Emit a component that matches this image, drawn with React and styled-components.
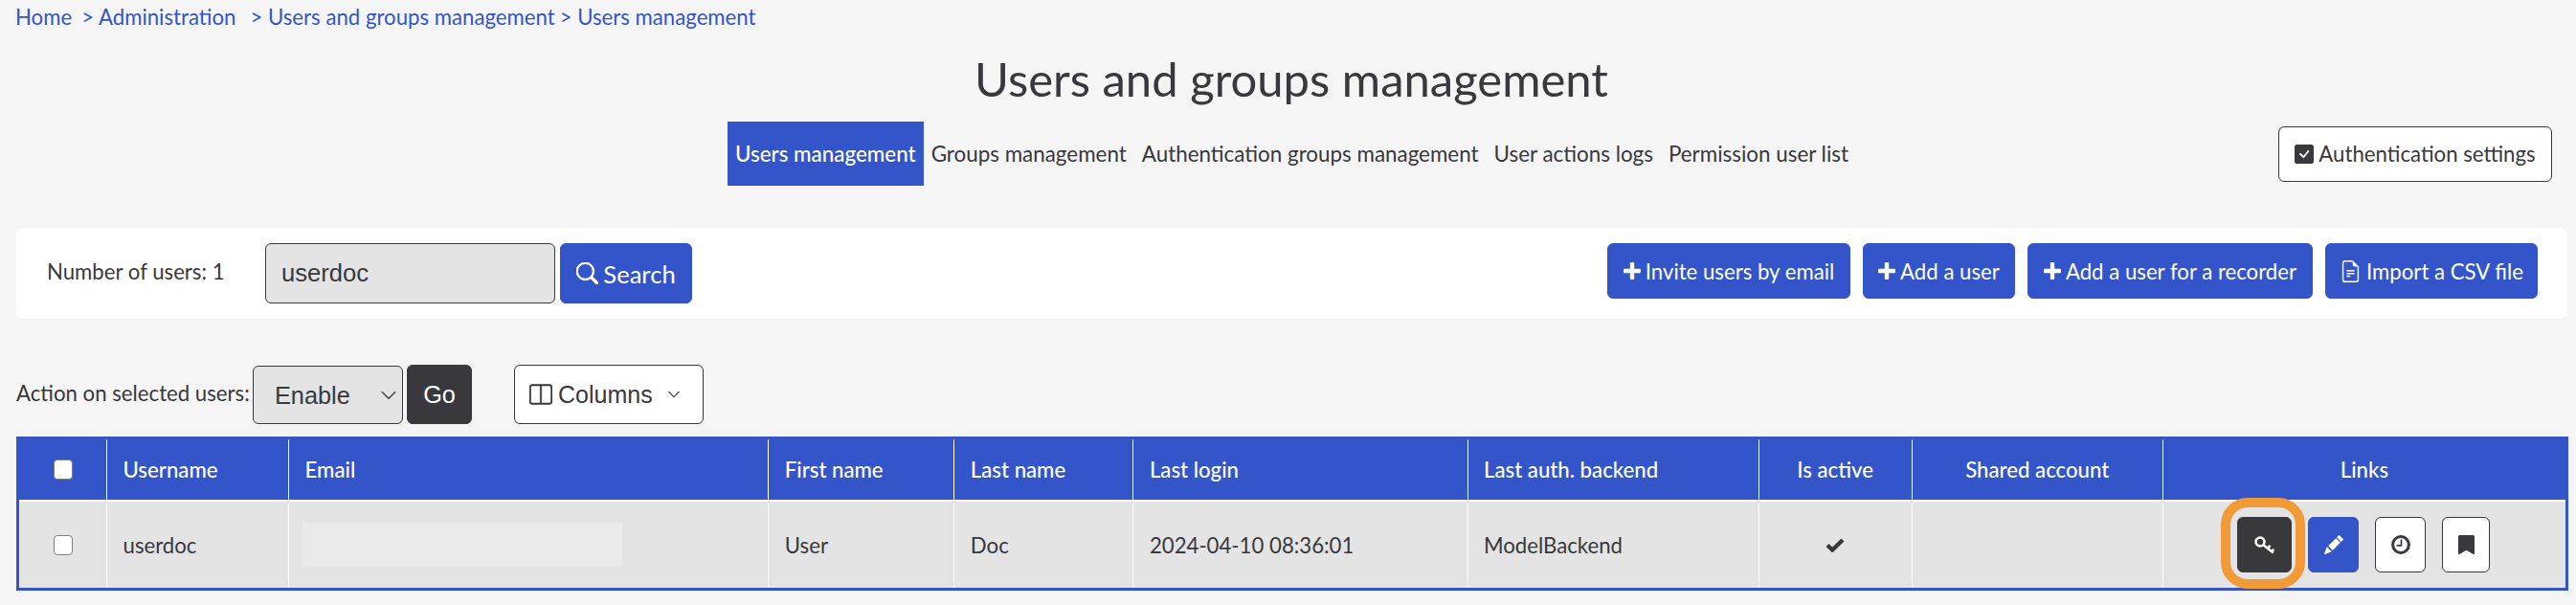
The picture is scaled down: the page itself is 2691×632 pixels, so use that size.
import React from "react";
import styled, { createGlobalStyle } from "styled-components";
import {
  BsCheckSquareFill,
  BsChevronDown,
  BsFileEarmarkText,
  BsLayoutSplit,
  BsPencilFill,
  BsSearch,
} from "react-icons/bs";

const BLUE = "#3355c9";
const DARK = "#38383d";

const GlobalStyle = createGlobalStyle`
  html, body {
    margin: 0;
    padding: 0;
    background: #f5f5f5;
    color: ${DARK};
    font-family: "Lato", "Liberation Sans", sans-serif;
    font-size: 22.2px;
  }
`;

const Page = styled.div`
  width: 2691px;
  height: 632px;
  overflow: hidden;
`;

const Breadcrumb = styled.nav`
  display: flex;
  height: 57px;
  padding: 5px 0 0 16px;
  box-sizing: border-box;
  line-height: 26px;
  color: ${BLUE};
`;

const Crumb = styled.a`
  color: ${BLUE};
  text-decoration: none;
  margin-right: ${(p) => p.$gap || 0}px;
  white-space: pre;
`;

const Title = styled.h1`
  margin: 0;
  height: 70px;
  padding-left: 7px;
  line-height: 50px;
  font-size: 49px;
  font-weight: 400;
  text-align: center;
`;

const TabRow = styled.div`
  display: grid;
  grid-template-columns: 1fr auto 1fr;
  align-items: center;
  height: 67px;
`;

const Tabs = styled.div`
  grid-column: 2;
  display: flex;
  height: 100%;
  margin-left: 8px;
  font-size: 22.4px;
`;

const Tab = styled.a`
  display: flex;
  align-items: center;
  padding: 0 8px;
  font-weight: ${(p) => (p.$active ? 500 : 400)};
  color: ${(p) => (p.$active ? "#fff" : DARK)};
  background: ${(p) => (p.$active ? BLUE : "transparent")};
`;

const Button = styled.button`
  display: inline-flex;
  align-items: center;
  justify-content: center;
  gap: 5px;
  box-sizing: border-box;
  width: ${(p) => p.$width}px;
  height: ${(p) => p.$height || 58}px;
  padding: 0;
  border: 1px solid ${(p) => (p.$variant === "outline" || p.$variant === "dark" ? DARK : BLUE)};
  border-radius: 6px;
  font: inherit;
  color: ${(p) => (p.$variant === "outline" ? DARK : "#fff")};
  background: ${(p) => (p.$variant === "outline" ? "#fff" : p.$variant === "dark" ? DARK : BLUE)};
`;

const AuthButton = styled(Button)`
  grid-column: 3;
  justify-self: end;
  margin-right: 25px;
`;

const SearchPanel = styled.section`
  display: flex;
  align-items: flex-start;
  justify-content: space-between;
  height: 95px;
  margin: 44px 9px 0 17px;
  padding: 16px 31px 0 32px;
  box-sizing: border-box;
  border-radius: 8px;
  background: #fff;
`;

const SearchForm = styled.form`
  display: flex;
  align-items: center;
  margin: 0;
`;

const UserCount = styled.span`
  width: 228px;
  padding-bottom: 5px;
`;

const SearchInput = styled.input`
  box-sizing: border-box;
  width: 303px;
  height: 63px;
  padding: 0 16px;
  border: 1px solid ${DARK};
  border-radius: 6px;
  background: #e4e4e4;
  color: ${DARK};
  font-family: "Liberation Sans", Arial, sans-serif;
  font-size: 25.6px;
`;

const SearchButton = styled(Button)`
  margin-left: 5px;
  font-size: 25.6px;
  gap: 5px;
  svg {
    stroke: currentColor;
    stroke-width: 0.6;
  }
`;

const PanelActions = styled.div`
  display: flex;
  gap: 13px;
`;

const ActionRow = styled.form`
  display: flex;
  align-items: center;
  height: 62px;
  margin: 48px 0 13px 17px;
`;

const ActionLabel = styled.label`
  width: 247px;
  padding-bottom: 4px;
`;

const SelectWrap = styled.span`
  position: relative;
  display: inline-block;
  height: 61px;
  margin-top: 1px;
  color: ${DARK};
`;

const Select = styled.select`
  appearance: none;
  box-sizing: border-box;
  width: 157px;
  height: 61px;
  padding: 0 0 0 22px;
  border: 1px solid ${DARK};
  border-radius: 6px;
  background: #e4e4e4;
  color: ${DARK};
  font-family: "Liberation Sans", Arial, sans-serif;
  font-size: 25.3px;
`;

const SelectChevron = styled(BsChevronDown)`
  position: absolute;
  top: 22px;
  right: 6px;
  width: 18px;
  height: 18px;
  stroke: currentColor;
  stroke-width: 0.3;
  pointer-events: none;
`;

const GoButton = styled(Button)`
  margin-left: 4px;
  font-family: "Liberation Sans", Arial, sans-serif;
  font-size: 25.3px;
`;

const ColumnsButton = styled(Button)`
  justify-content: flex-start;
  margin-left: 44px;
  padding-left: 15px;
  gap: 6px;
  font-family: "Liberation Sans", Arial, sans-serif;
  font-size: 25px;
  svg {
    stroke: currentColor;
    stroke-width: 0.35;
  }
`;

const ColumnsChevron = styled(BsChevronDown)`
  width: 14px;
  height: 14px;
  margin-left: 9px;
`;

const Table = styled.table`
  box-sizing: border-box;
  width: 2666px;
  margin-left: 17px;
  border: 3px solid ${BLUE};
  border-collapse: separate;
  border-spacing: 0;
  table-layout: fixed;
`;

const HeaderCell = styled.th`
  box-sizing: border-box;
  height: 65px;
  padding: 0 16.5px;
  border-bottom: 2px solid #fff;
  background: ${BLUE};
  color: #fff;
  font-weight: 500;
  text-align: ${(p) => p.$align || "left"};
  & + & {
    border-left: 1.5px solid #fff;
  }
`;

const Cell = styled.td`
  box-sizing: border-box;
  height: 90px;
  padding: 0 16.5px;
  background: #e4e4e4;
  text-align: ${(p) => p.$align || "left"};
  & + & {
    border-left: 1.5px solid #fff;
  }
`;

const Checkbox = styled.input.attrs({ type: "checkbox" })`
  appearance: none;
  display: block;
  width: 20px;
  height: 21px;
  margin: 0 auto;
  border: 1.5px solid #808080;
  border-radius: 4px;
  background: #fff;
`;

const HiddenEmail = styled.div`
  width: 334px;
  height: 46px;
  margin-left: -3px;
  background: #eaeaea;
`;

const ActiveCheck = styled.svg`
  display: block;
  width: 20px;
  height: 15px;
  margin: 0 auto;
`;

const LinkGroup = styled.div`
  display: flex;
  justify-content: flex-end;
  gap: 17px;
  padding-right: 62.5px;
`;

const RingAnchor = styled.span`
  position: relative;
  display: inline-flex;
  &::after {
    content: "";
    position: absolute;
    top: -20px;
    right: -14px;
    bottom: -17px;
    left: -17px;
    border: 10px solid #f39a38;
    border-radius: 28px;
    pointer-events: none;
  }
`;

const columnWidths = [91, 190, 501, 194, 187, 349, 304, 160, 262, 421];

function KeyIcon() {
  return (
    <svg width="21" height="19" viewBox="0 0 21 19" fill="none" stroke="currentColor" strokeWidth="2.6">
      <circle cx="6" cy="6" r="4.5" />
      <path d="M9.5 9.3L19.8 17.6M13.8 12.8l2.8-3M18 16.2l2.2-2.4" />
    </svg>
  );
}

function PlusIcon() {
  return (
    <svg width="18" height="18" viewBox="0 0 18 18" fill="currentColor">
      <path d="M6.8 1a1 1 0 0 1 1-1h2.4a1 1 0 0 1 1 1v5.8H17a1 1 0 0 1 1 1v2.4a1 1 0 0 1-1 1h-5.8V17a1 1 0 0 1-1 1H7.8a1 1 0 0 1-1-1v-5.8H1a1 1 0 0 1-1-1V7.8a1 1 0 0 1 1-1h5.8z" />
    </svg>
  );
}

function ClockIcon() {
  return (
    <svg width="20" height="20" viewBox="0 0 20 20" fill="none" stroke="currentColor">
      <circle cx="10" cy="10" r="8.4" strokeWidth="3" />
      <path d="M10.5 4.6v6.2H5.6" strokeWidth="1.7" />
    </svg>
  );
}

function BookmarkIcon() {
  return (
    <svg width="17" height="20" viewBox="0 0 17 20" fill="currentColor">
      <path d="M1.5 0h14A1.5 1.5 0 0 1 17 1.5V19a1 1 0 0 1-1.5.8L8.5 15.8l-7 4A1 1 0 0 1 0 19V1.5A1.5 1.5 0 0 1 1.5 0z" />
    </svg>
  );
}

export default function App() {
  return (
    <Page>
      <GlobalStyle />
      <Breadcrumb>
        <Crumb $gap={10}>Home</Crumb>
        <Crumb $gap={15}>&gt; Administration</Crumb>
        <Crumb $gap={5}>&gt; Users and groups management</Crumb>
        <Crumb>&gt; Users management</Crumb>
      </Breadcrumb>
      <Title>Users and groups management</Title>
      <TabRow>
        <Tabs>
          <Tab $active>Users management</Tab>
          <Tab>Groups management</Tab>
          <Tab>Authentication groups management</Tab>
          <Tab>User actions logs</Tab>
          <Tab>Permission user list</Tab>
        </Tabs>
        <AuthButton $variant="outline" $width={286}>
          <BsCheckSquareFill size={20} />
          Authentication settings
        </AuthButton>
      </TabRow>
      <SearchPanel>
        <SearchForm>
          <UserCount>Number of users: 1</UserCount>
          <SearchInput defaultValue="userdoc" />
          <SearchButton $width={138} $height={63}>
            <BsSearch size={23} />
            Search
          </SearchButton>
        </SearchForm>
        <PanelActions>
          <Button $width={254}>
            <PlusIcon />
            Invite users by email
          </Button>
          <Button $width={159}>
            <PlusIcon />
            Add a user
          </Button>
          <Button $width={298}>
            <PlusIcon />
            Add a user for a recorder
          </Button>
          <Button $width={222}>
            <BsFileEarmarkText size={23} />
            Import a CSV file
          </Button>
        </PanelActions>
      </SearchPanel>
      <ActionRow>
        <ActionLabel>Action on selected users:</ActionLabel>
        <SelectWrap>
          <Select defaultValue="enable">
            <option value="enable">Enable</option>
          </Select>
          <SelectChevron />
        </SelectWrap>
        <GoButton $variant="dark" $width={68} $height={62}>
          Go
        </GoButton>
        <ColumnsButton $variant="outline" $width={198} $height={62}>
          <BsLayoutSplit size={24} />
          Columns
          <ColumnsChevron />
        </ColumnsButton>
      </ActionRow>
      <Table>
        <colgroup>
          {columnWidths.map((w, i) => (
            <col key={i} style={{ width: w }} />
          ))}
        </colgroup>
        <thead>
          <tr>
            <HeaderCell>
              <Checkbox />
            </HeaderCell>
            <HeaderCell>Username</HeaderCell>
            <HeaderCell>Email</HeaderCell>
            <HeaderCell>First name</HeaderCell>
            <HeaderCell>Last name</HeaderCell>
            <HeaderCell>Last login</HeaderCell>
            <HeaderCell>Last auth. backend</HeaderCell>
            <HeaderCell $align="center">Is active</HeaderCell>
            <HeaderCell $align="center">Shared account</HeaderCell>
            <HeaderCell $align="center">Links</HeaderCell>
          </tr>
        </thead>
        <tbody>
          <tr>
            <Cell>
              <Checkbox />
            </Cell>
            <Cell>userdoc</Cell>
            <Cell>
              <HiddenEmail />
            </Cell>
            <Cell>User</Cell>
            <Cell>Doc</Cell>
            <Cell>2024-04-10 08:36:01</Cell>
            <Cell>ModelBackend</Cell>
            <Cell $align="center">
              <ActiveCheck viewBox="0 0 20 15" fill="none" stroke="currentColor" strokeWidth="4.4">
                <path d="M2 7.5l5.2 5L18 2" />
              </ActiveCheck>
            </Cell>
            <Cell />
            <Cell>
              <LinkGroup>
                <RingAnchor>
                  <Button $variant="dark" $width={57}>
                    <KeyIcon />
                  </Button>
                </RingAnchor>
                <Button $width={53}>
                  <BsPencilFill size={20} />
                </Button>
                <Button $variant="outline" $width={53}>
                  <ClockIcon />
                </Button>
                <Button $variant="outline" $width={50}>
                  <BookmarkIcon />
                </Button>
              </LinkGroup>
            </Cell>
          </tr>
        </tbody>
      </Table>
    </Page>
  );
}
